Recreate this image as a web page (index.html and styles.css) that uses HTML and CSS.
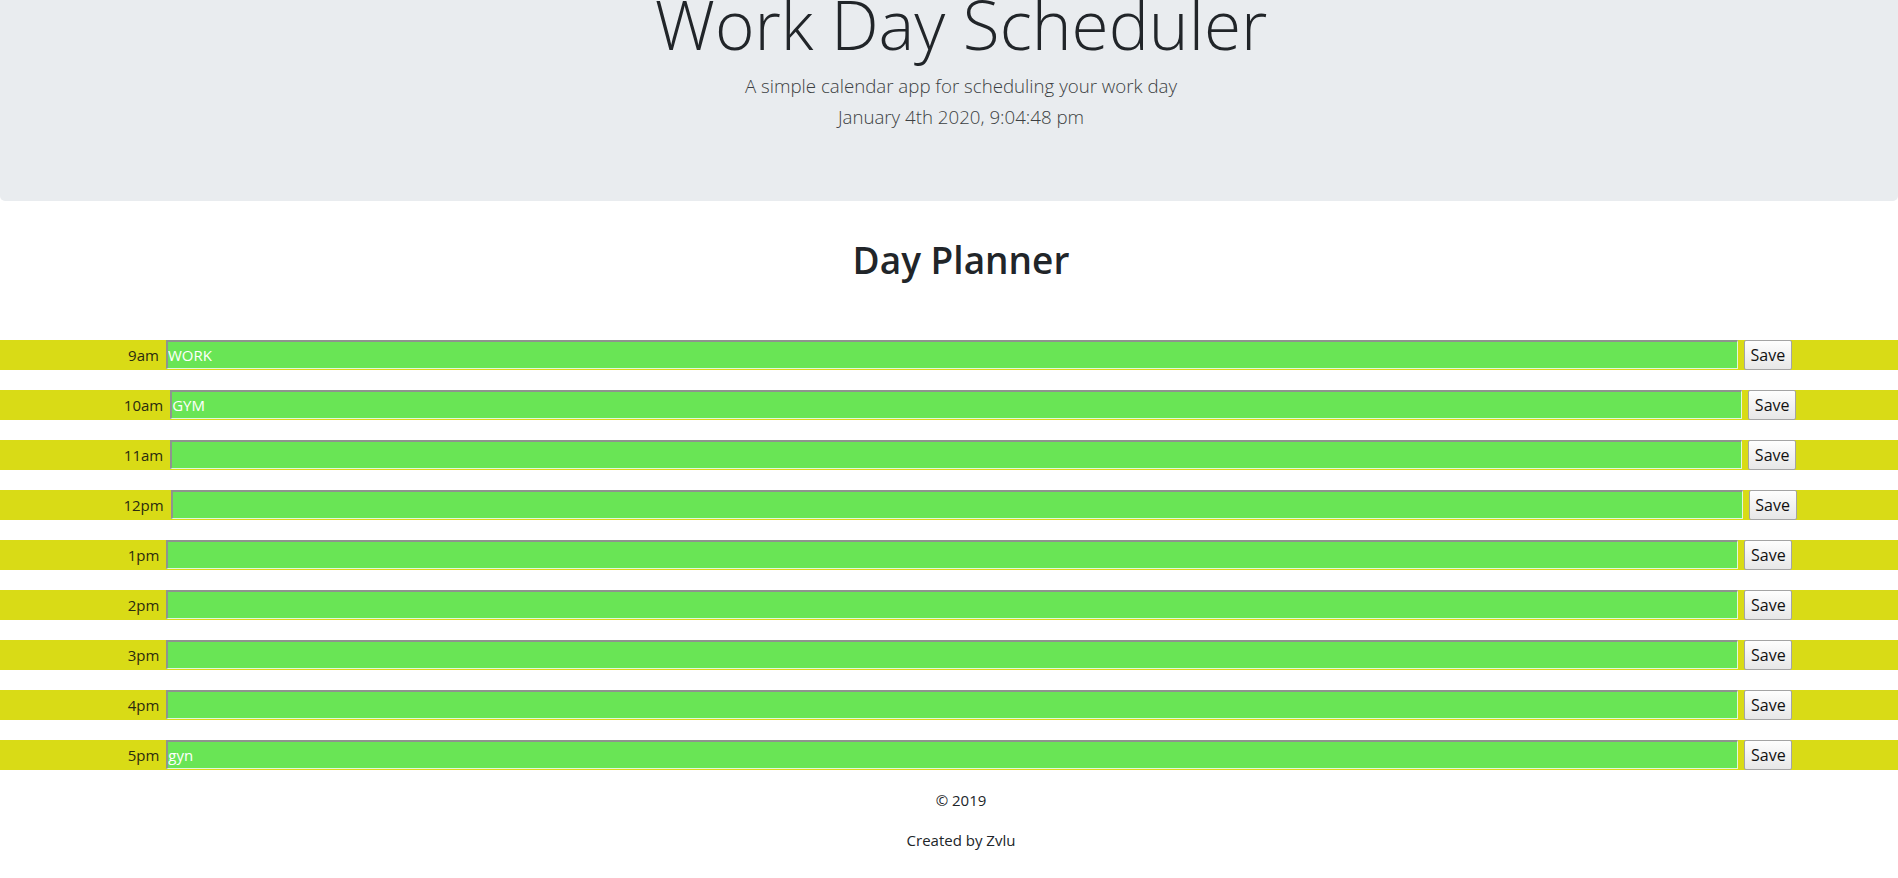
FILE: index.html
```html
<!DOCTYPE html>
<html lang="en">
<head>
<meta charset="utf-8">
<title>Work Day Scheduler</title>
<link rel="stylesheet" href="styles.css">
</head>
<body>
<header class="jumbotron">
  <h1 class="display">Work Day Scheduler</h1>
  <p class="lead">A simple calendar app for scheduling your work day</p>
  <p class="lead">January 4th 2020, 9:04:48 pm</p>
</header>
<main class="planner">
  <h2 class="planner-title">Day Planner</h2>
  <div class="rows">
    <div class="row"><div class="hour">9am</div><textarea class="desc">WORK</textarea><div class="act"><button class="save">Save</button></div></div>
    <div class="row"><div class="hour">10am</div><textarea class="desc">GYM</textarea><div class="act"><button class="save">Save</button></div></div>
    <div class="row"><div class="hour">11am</div><textarea class="desc"></textarea><div class="act"><button class="save">Save</button></div></div>
    <div class="row"><div class="hour">12pm</div><textarea class="desc"></textarea><div class="act"><button class="save">Save</button></div></div>
    <div class="row"><div class="hour">1pm</div><textarea class="desc"></textarea><div class="act"><button class="save">Save</button></div></div>
    <div class="row"><div class="hour">2pm</div><textarea class="desc"></textarea><div class="act"><button class="save">Save</button></div></div>
    <div class="row"><div class="hour">3pm</div><textarea class="desc"></textarea><div class="act"><button class="save">Save</button></div></div>
    <div class="row"><div class="hour">4pm</div><textarea class="desc"></textarea><div class="act"><button class="save">Save</button></div></div>
    <div class="row"><div class="hour">5pm</div><textarea class="desc">gyn</textarea><div class="act"><button class="save">Save</button></div></div>
  </div>
</main>
<footer class="footer">
  <p>© 2019</p>
  <p>Created by Zvlu</p>
</footer>
</body>
</html>
```
FILE: styles.css
```css
* { box-sizing: border-box; }
html, body { margin: 0; padding: 0; }
body {
  font-family: "Open Sans", "Noto Sans", sans-serif;
  color: #212529;
  background: #fff;
  font-size: 16px;
  line-height: 1.5;
}
.jumbotron {
  background: #e9ecef;
  text-align: center;
  padding: 0 0 69px 24px;
  border-radius: 0 0 5px 5px;
}
.display {
  margin: -19px 0 3px;
  font-size: 67.5px;
  font-weight: 300;
  line-height: 86px;
  color: #212529;
}
.lead {
  margin: 0;
  font-size: 18.7px;
  font-weight: 300;
  line-height: 31px;
  color: #3c3f42;
}
.planner-title {
  margin: 0;
  padding: 29px 0 0 24px;
  height: 139px;
  text-align: center;
  font-size: 37px;
  font-weight: 600;
  line-height: 60px;
}
.rows {
  display: flex;
  flex-direction: column;
  gap: 20px;
}
.row {
  display: flex;
  align-items: flex-start;
  height: 30px;
  background: #d9db16;
}
.hour {
  flex: 1 1 auto;
  text-align: right;
  padding-right: 7px;
  line-height: 30px;
  font-size: 15px;
  color: #2a2a10;
}
.desc {
  flex: none;
  width: 1572px;
  height: 29px;
  margin: 0;
  padding: 2px 0 0 0;
  resize: none;
  overflow: hidden;
  background: #69e555;
  color: #fff;
  font-family: inherit;
  font-size: 15px;
  line-height: 22px;
  border-style: solid;
  border-width: 2px 1px 1px 2px;
  border-color: #8f948e #e2f6de #e2f6de #8f948e;
}
.act {
  flex: 1 1 32px;
  min-width: 0;
  padding-left: 6px;
  display: flex;
}
.save {
  width: 48px;
  height: 30px;
  padding: 0;
  margin: 0;
  font-family: inherit;
  font-size: 16px;
  color: #111;
  background: linear-gradient(#fefefe, #e7e7e7);
  border: 1px solid #a4a4a4;
  border-radius: 2px;
}
.footer {
  text-align: center;
  font-size: 15px;
  padding: 19px 0 0 24px;
}
.footer p {
  margin: 0 0 18px;
  line-height: 22px;
}
```
